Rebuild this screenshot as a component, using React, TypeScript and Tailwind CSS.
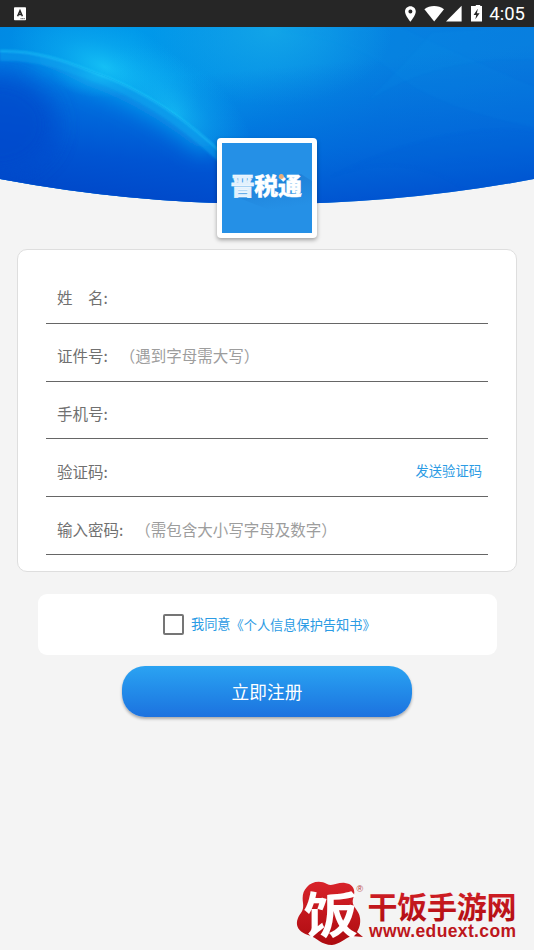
import { useState } from 'react';

interface Field {
  id: string;
  label: string;
  hint?: string;
  action?: string;
}

const FIELDS: Field[] = [
  { id: 'name', label: '姓\u3000名:' },
  { id: 'idNumber', label: '证件号:', hint: '（遇到字母需大写）' },
  { id: 'phone', label: '手机号:' },
  { id: 'code', label: '验证码:', action: '发送验证码' },
  { id: 'password', label: '输入密码:', hint: '（需包含大小写字母及数字）' },
];

function StatusBar() {
  return (
    <header className="flex h-[27px] shrink-0 items-center justify-between bg-[#262626] pl-3.5 pr-[9px] text-white">
      <svg width="12" height="14" viewBox="0 0 12 14">
        <rect y="0.3" width="12" height="13" rx="0.8" fill="#fff" />
        <path d="M3.6 9.3 6 3.6l2.4 5.7M4.4 7.6h3.2" fill="none" stroke="#262626" strokeWidth="1.5" />
        <path d="M6.5 11.7h4.3" stroke="#262626" strokeWidth="0.8" strokeDasharray="1.2 0.4" />
      </svg>
      <div className="flex items-center">
        <svg width="84" height="20" viewBox="0 0 84 20" fill="#fff">
          <path d="M10.4 2.2c-3.1 0-5.4 2.4-5.4 5.4 0 3.8 5.4 10.2 5.4 10.2s5.4-6.4 5.4-10.2c0-3-2.3-5.4-5.4-5.4Zm0 7.4a2 2 0 1 1 0-4 2 2 0 0 1 0 4Z" />
          <path d="M34.2 17.4 24.4 5.3c5.4-4.4 14-4.4 19.6 0Z" />
          <path d="M61.6 1.8v15.6H46Z" />
          <path fillRule="evenodd" d="M74 2h1.8V.9h4.4V2H82v15.5H71V2Zm3.6 3-4 6h2.6l-.8 4.3 4.2-6h-2.7l.9-4.3Z" />
        </svg>
        <span className="ml-[5px] pt-0.5 font-[Roboto,sans-serif] text-[18.5px] leading-[25px]">4:05</span>
      </div>
    </header>
  );
}

function Banner() {
  return (
    <svg className="block h-[178px] w-full" viewBox="0 0 534 178">
      <defs>
        <linearGradient id="sky" x1="0" y1="0" x2="1" y2="0.1">
          <stop offset="0" stopColor="#008ae4" />
          <stop offset="0.25" stopColor="#0099ea" />
          <stop offset="0.5" stopColor="#0490e6" />
          <stop offset="0.75" stopColor="#0680e0" />
          <stop offset="1" stopColor="#087cde" />
        </linearGradient>
        <linearGradient id="fade" x1="0.35" y1="0" x2="0.62" y2="1">
          <stop offset="0.25" stopColor="#0060d8" stopOpacity="0" />
          <stop offset="0.7" stopColor="#0060d8" stopOpacity="0.7" />
          <stop offset="1" stopColor="#0050cf" stopOpacity="0.95" />
        </linearGradient>
        <radialGradient id="glow">
          <stop offset="0" stopColor="#1bcdf9" />
          <stop offset="0.5" stopColor="#12b8f4" stopOpacity="0.5" />
          <stop offset="1" stopColor="#10b4f4" stopOpacity="0" />
        </radialGradient>
        <radialGradient id="topGlow">
          <stop offset="0" stopColor="#14a8e8" stopOpacity="0.85" />
          <stop offset="1" stopColor="#14a4ea" stopOpacity="0" />
        </radialGradient>
        <linearGradient id="planet" x1="0.35" y1="0" x2="0.15" y2="1">
          <stop offset="0" stopColor="#0084e6" />
          <stop offset="0.35" stopColor="#006cdd" />
          <stop offset="0.65" stopColor="#0054d2" />
          <stop offset="1" stopColor="#0044c6" />
        </linearGradient>
        <filter id="soft" x="-20%" y="-30%" width="140%" height="160%">
          <feGaussianBlur stdDeviation="11" />
        </filter>
        <filter id="edge">
          <feGaussianBlur stdDeviation="1.2" />
        </filter>
        <clipPath id="curve">
          <path d="M0 0H534V152Q267 202 0 152Z" />
        </clipPath>
        <clipPath id="disc">
          <path d="M0 24C35 23 65 34 93 45C143 62 190 95 226 130Q248 152 262 180H0Z" />
        </clipPath>
      </defs>
      <g clipPath="url(#curve)">
        <rect width="534" height="180" fill="url(#sky)" />
        <ellipse cx="272" cy="4" rx="120" ry="75" fill="url(#topGlow)" />
        <rect width="534" height="180" fill="url(#fade)" />
        <ellipse cx="105" cy="40" rx="100" ry="48" transform="rotate(22 105 40)" fill="url(#glow)" opacity="0.75" />
        <ellipse cx="175" cy="86" rx="90" ry="50" transform="rotate(38 175 86)" fill="url(#glow)" opacity="0.6" />
        <path d="M280 4Q355 12 395 46T534 100V60Q440 20 400 0Z" fill="#0e96e8" opacity="0.09" filter="url(#edge)" />
        <path d="M432 6Q410 32 370 72Q440 28 534 32V0Z" fill="#1099ea" opacity="0.1" filter="url(#edge)" />
        <path d="M330 150Q410 120 470 167L534 150V104Q440 94 330 150Z" fill="#005cd8" opacity="0.15" filter="url(#edge)" />
        <g clipPath="url(#disc)">
          <rect y="20" width="270" height="160" fill="url(#planet)" />
          <ellipse cx="-5" cy="98" rx="62" ry="52" fill="#004acb" opacity="0.75" filter="url(#soft)" />
          <path d="M40 22C65 30 75 36 93 45C143 62 190 95 214 116" fill="none" stroke="#089cec" strokeWidth="30" filter="url(#soft)" />
          <path
            d="M0 28C35 27 65 37 93 48C143 65 186 96 222 130"
            fill="none"
            stroke="#0aa4ee"
            strokeWidth="12"
            opacity="0.5"
            filter="url(#edge)"
          />
          <ellipse cx="104" cy="47" rx="52" ry="24" fill="url(#glow)" opacity="0.6" />
        </g>
        <path
          d="M0 24C35 23 65 34 93 45C143 62 190 95 226 130"
          fill="none"
          stroke="#20cdfb"
          strokeWidth="2"
          opacity="0.6"
          filter="url(#edge)"
        />
      </g>
    </svg>
  );
}

function AppLogo() {
  return (
    <div className="relative z-10 mx-auto -mt-[67px] h-[100px] w-[100px] rounded-[4px] bg-white p-[5px] shadow-[0_2px_4px_rgba(0,0,0,0.35)]">
      <svg className="block h-[90px] w-[90px]" viewBox="0 0 90 90">
        <defs>
          <linearGradient id="logoShade" x1="0" y1="0" x2="0.3" y2="1">
            <stop offset="0" stopColor="#1b78cf" />
            <stop offset="1" stopColor="#2590e6" />
          </linearGradient>
        </defs>
        <rect width="90" height="90" fill="#2590e6" />
        <path d="M12 53 79 31l11 7v31L50 68Z" fill="url(#logoShade)" opacity="0.8" />
        <text
          x="8.6"
          y="52"
          fontSize="24"
          fontWeight="900"
          textLength="71.5"
          fill="#fff"
          stroke="#fff"
          strokeWidth="0.3"
          fontFamily="'Noto Sans CJK SC', sans-serif"
        >
          <tspan fill="#e2f1fd">晋</tspan>税通
        </text>
        <circle cx="59.3" cy="33.4" r="2.5" fill="#e9ae7b" />
      </svg>
    </div>
  );
}

function FieldRow({ field }: { field: Field }) {
  return (
    <div className="flex h-[57.8px] items-end border-b border-[#666] pb-[11.4px] pl-[11px] pr-1.5">
      <label htmlFor={field.id} className="shrink-0 whitespace-pre text-[15.5px] leading-7 text-[#707070]">
        {field.label}
      </label>
      <input
        id={field.id}
        placeholder={field.hint}
        className="ml-3 h-7 min-w-0 flex-1 bg-transparent text-[15.5px] leading-7 text-[#555] outline-none placeholder:text-[#9d9d9d]"
      />
      {field.action && (
        <button type="button" className="shrink-0 text-[13.3px] leading-7 text-[#2b9be4]">
          {field.action}
        </button>
      )}
    </div>
  );
}

function SiteMark() {
  return (
    <div className="absolute bottom-0 right-4">
      <svg className="block" width="222" height="78" viewBox="0 -6 222 78">
        <defs>
          <linearGradient id="red" x1="0" y1="0" x2="0" y2="1">
            <stop offset="0" stopColor="#d8232a" />
            <stop offset="1" stopColor="#ad0b10" />
          </linearGradient>
        </defs>
        <path
          d="M11 9C15 4 24 2 31 6C36 9 42 4 49 5C58 6 60 13 57 21C55 29 63 31 64 40C65 48 62 52 61 54L67 59L55 58C48 61 44 66 36 67C25 67 22 60 12 57C2 54 -1 47 2 40C5 34 8 33 7 25C6 18 7 13 11 9Z"
          fill="url(#red)"
        />
        <text
          transform="translate(7.5 54.5) scale(1.12 1)"
          fontSize="49"
          fontWeight="700"
          fill="#fff"
          fontFamily="'Noto Sans CJK SC', sans-serif"
        >
          饭
        </text>
        <text x="60.5" y="14" fontSize="9" fill="#b7383b" fontFamily="'Liberation Sans', sans-serif">
          ®
        </text>
        <text
          x="71.5"
          y="39.5"
          fontSize="30"
          fontWeight="700"
          textLength="149"
          fill="url(#red)"
          fontFamily="'Noto Sans CJK SC', sans-serif"
        >
          干饭手游网
        </text>
        <text
          x="73"
          y="59"
          fontSize="17.5"
          fontWeight="700"
          textLength="147"
          fill="#bd171c"
          fontFamily="'Liberation Sans', sans-serif"
        >
          www.eduext.com
        </text>
      </svg>
    </div>
  );
}

export default function App() {
  const [agreed, setAgreed] = useState(false);

  return (
    <div className="relative flex h-[950px] w-[534px] flex-col overflow-hidden bg-[#f4f4f4] font-['Noto_Sans_CJK_SC',sans-serif]">
      <StatusBar />
      <Banner />
      <AppLogo />

      <form className="mx-[17px] mt-[11px]" onSubmit={e => e.preventDefault()}>
        {/* Registration fields */}
        <section className="h-[323px] rounded-[10px] border border-[#dedede] bg-white px-7 pt-4">
          {FIELDS.map(field => (
            <FieldRow key={field.id} field={field} />
          ))}
        </section>

        {/* Privacy notice */}
        <label className="ml-[21px] mr-5 mt-[22px] flex h-[61px] items-center rounded-[9px] bg-white pl-[125px] text-[13.2px] text-[#2b9be4]">
          <input
            type="checkbox"
            checked={agreed}
            onChange={e => setAgreed(e.target.checked)}
            className="mr-[7px] h-[21px] w-[21px] appearance-none rounded-[2px] border-2 border-[#757575] checked:bg-[#2b9be4]"
          />
          <span className="pb-px">我同意</span>
          <span>《个人信息保护告知书》</span>
        </label>

        <button
          type="submit"
          className="mx-auto mt-[11px] block h-[51px] w-[290px] rounded-[23px] bg-gradient-to-b from-[#2ba3f2] to-[#1d72df] text-[17.7px] text-white shadow-[0_2px_3px_rgba(0,0,0,0.3)]"
        >
          立即注册
        </button>
      </form>

      <SiteMark />
    </div>
  );
}
